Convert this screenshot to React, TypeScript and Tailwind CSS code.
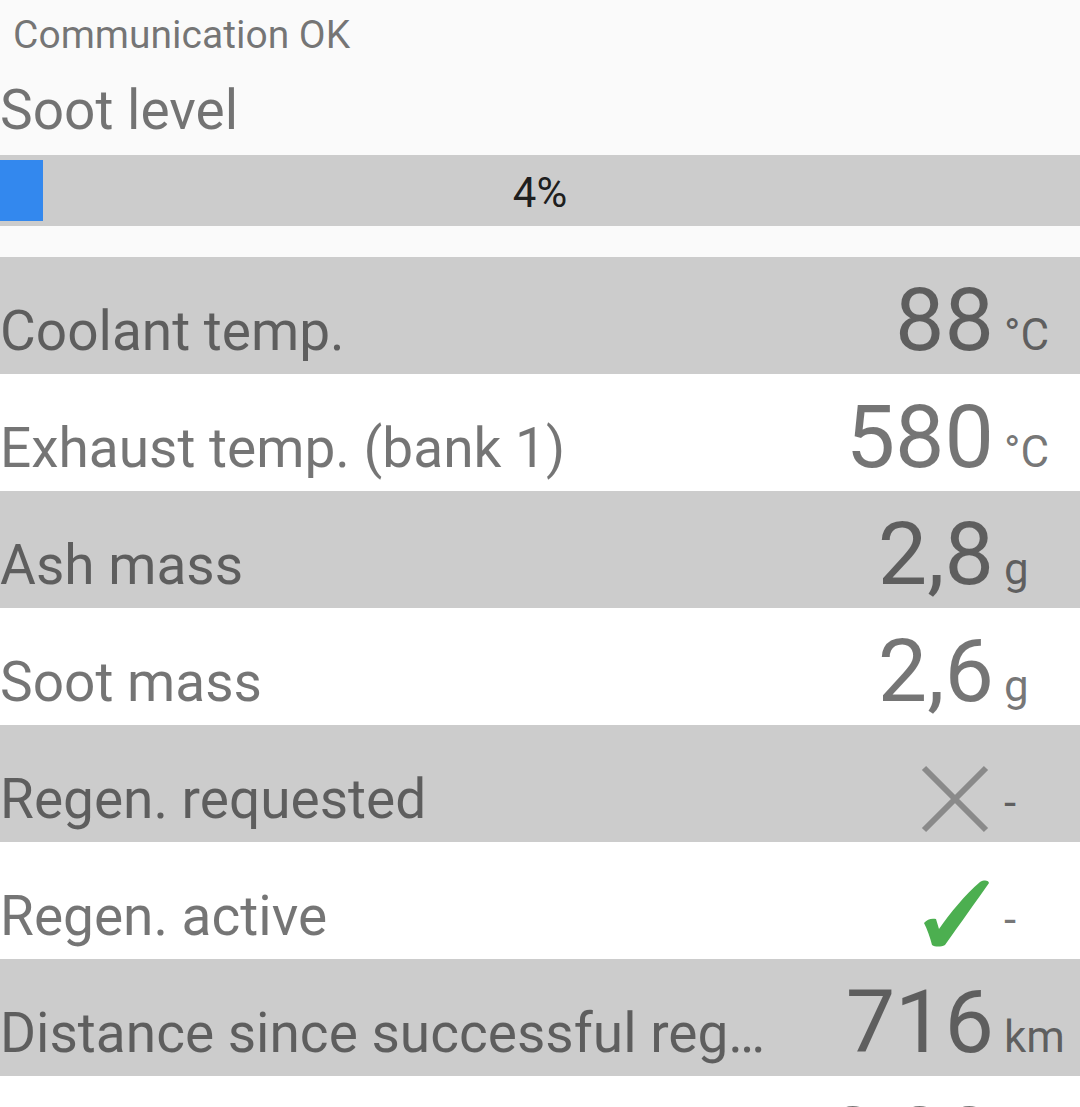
import type { ReactNode } from 'react'

type Row = { label: string; value: ReactNode; unit: string; shade: boolean }

function Cross() {
  return (
    <svg width="70" height="70" viewBox="0 0 70 70" className="mr-[4px] -mb-[8px] inline-block">
      <path d="M4 4 L66 66 M66 4 L4 66" stroke="#8a8a8a" strokeWidth="6" fill="none" />
    </svg>
  )
}

function Check() {
  return (
    <svg width="70" height="72" viewBox="0 0 70 72" className="mr-[4px] -mb-[7px] inline-block">
      <path
        d="M4 44 C7 40 12 39 16 40 L19 50 C30 34 45 16 60 3 C64 1 68 1 69 4 C57 21 40 45 25 66 C21 68 15 68 12 66 C10 58 7 50 4 44 Z"
        fill="#4caf50"
      />
    </svg>
  )
}

const ROWS: Row[] = [
  { label: 'Coolant temp.', value: '88', unit: '°C', shade: true },
  { label: 'Exhaust temp. (bank 1)', value: '580', unit: '°C', shade: false },
  { label: 'Ash mass', value: '2,8', unit: 'g', shade: true },
  { label: 'Soot mass', value: '2,6', unit: 'g', shade: false },
  { label: 'Regen. requested', value: <Cross />, unit: '-', shade: true },
  { label: 'Regen. active', value: <Check />, unit: '-', shade: false },
  { label: 'Distance since successful regeneration', value: '716', unit: 'km', shade: true },
  { label: 'Time since successful regeneration', value: '0,00', unit: 'h', shade: false },
]

function DataRow({ label, value, unit, shade }: Row) {
  return (
    <div className={`flex h-[117px] items-baseline overflow-hidden pt-[19px] ${shade ? 'bg-[#cccccc]' : 'bg-white'}`}>
      <div className="min-w-0 flex-1 truncate text-[55px] leading-[1.25]">{label}</div>
      <div className="w-[210px] shrink-0 text-right text-[88px] leading-none">{value}</div>
      <div className="w-[86px] shrink-0 pl-[10px] text-[44px] leading-[1.25]">{unit}</div>
    </div>
  )
}

export default function App() {
  const soot = 4
  return (
    <div className="min-h-screen bg-[#fafafa] font-[Roboto,sans-serif] text-black/[0.54]">
      <div className="pl-[13px] pt-[16px] text-[39px] leading-none">Communication OK</div>
      <div className="mt-[28px] text-[55px] leading-none">Soot level</div>

      <div className="mt-[17px] grid h-[71px] bg-[#cccccc]">
        <div className="col-start-1 row-start-1 my-[5px] w-[43px] bg-[#3388ee]" />
        <div className="col-start-1 row-start-1 mt-[17px] self-start text-center text-[42px] leading-none text-black/[0.87]">
          {soot}%
        </div>
      </div>

      <div className="mt-[31px]">
        {ROWS.map(r => (
          <DataRow key={r.label} {...r} />
        ))}
      </div>
    </div>
  )
}
